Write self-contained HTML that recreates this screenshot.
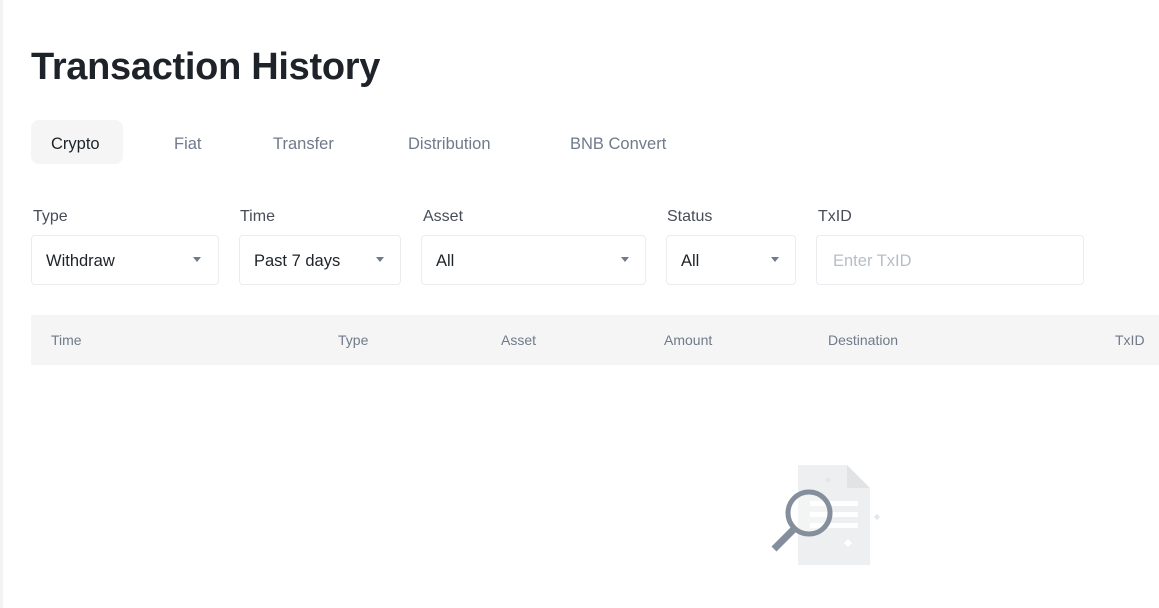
<!DOCTYPE html>
<html><head><style>
body{margin:0;width:1159px;height:608px;background:#fff;font-family:"Liberation Sans",sans-serif;position:relative;overflow:hidden;color:#1e2329}
.strip{position:absolute;left:0;top:0;width:3px;height:608px;background:#f3f3f3}
.a{position:absolute}
h1{position:absolute;left:31px;top:46px;margin:0;font-size:38px;font-weight:bold;letter-spacing:-0.3px}
.tab{position:absolute;top:122px;height:44px;line-height:44px;font-size:16.5px;color:#707a8a}
.lab{position:absolute;top:208px;font-size:16px;color:#474d57}
.sel{position:absolute;top:235px;height:48px;border:1px solid #eaecef;border-radius:4px;font-size:16.5px;line-height:50px;padding-left:14px;box-sizing:content-box}
.car{position:absolute;top:21px;width:0;height:0;border-left:4.5px solid transparent;border-right:4.5px solid transparent;border-top:5px solid #707a8a}
.th{position:absolute;top:315px;height:50px;line-height:50px;font-size:14px;color:#707a8a}
</style></head><body>
<div class="strip"></div>
<h1>Transaction History</h1>
<div class="a" style="left:31px;top:120px;width:92px;height:44px;background:#f5f5f5;border-radius:8px"></div>
<div class="tab" style="left:51px;color:#1e2329">Crypto</div>
<div class="tab" style="left:174px">Fiat</div>
<div class="tab" style="left:273px">Transfer</div>
<div class="tab" style="left:408px">Distribution</div>
<div class="tab" style="left:570px">BNB Convert</div>

<div class="lab" style="left:33px">Type</div>
<div class="lab" style="left:240px">Time</div>
<div class="lab" style="left:423px">Asset</div>
<div class="lab" style="left:667px">Status</div>
<div class="lab" style="left:818px">TxID</div>

<div class="sel" style="left:31px;width:172px">Withdraw<span class="car" style="left:161px"></span></div>
<div class="sel" style="left:239px;width:146px">Past 7 days<span class="car" style="left:136px"></span></div>
<div class="sel" style="left:421px;width:209px">All<span class="car" style="left:199px"></span></div>
<div class="sel" style="left:666px;width:114px">All<span class="car" style="left:104px"></span></div>
<div class="sel" style="left:816px;color:#b7bdc6;padding-left:16px;width:250px">Enter TxID</div>

<div class="a" style="left:31px;top:315px;width:1128px;height:50px;background:#f5f5f5"></div>
<div class="th" style="left:51px">Time</div>
<div class="th" style="left:338px">Type</div>
<div class="th" style="left:501px">Asset</div>
<div class="th" style="left:664px">Amount</div>
<div class="th" style="left:828px">Destination</div>
<div class="th" style="left:1115px">TxID</div>

<svg class="a" style="left:750px;top:450px" width="150" height="130" viewBox="0 0 150 130">
<path d="M48 15 H97 L120 38 V115 H48 Z" fill="#eeeff0"/>
<path d="M97 15 V38 H120 Z" fill="#e1e3e5"/>
<rect x="60" y="51" width="48" height="5" fill="#fff"/>
<rect x="60" y="62" width="48" height="5" fill="#fff"/>
<rect x="60" y="73" width="48" height="5" fill="#fff"/>
<path d="M78 27 l3 3 -3 3 -3 -3z" fill="#e4e6e8"/>
<path d="M127 64 l3 3 -3 3 -3 -3z" fill="#e4e6e8"/>
<path d="M98 89 l4 4 -4 4 -4 -4z" fill="#fff"/>
<circle cx="59" cy="63" r="21" fill="rgba(255,255,255,0.3)" stroke="#848e9c" stroke-width="5"/>
<path d="M44 79 L24 99" stroke="#848e9c" stroke-width="7"/>
</svg>
</body></html>
